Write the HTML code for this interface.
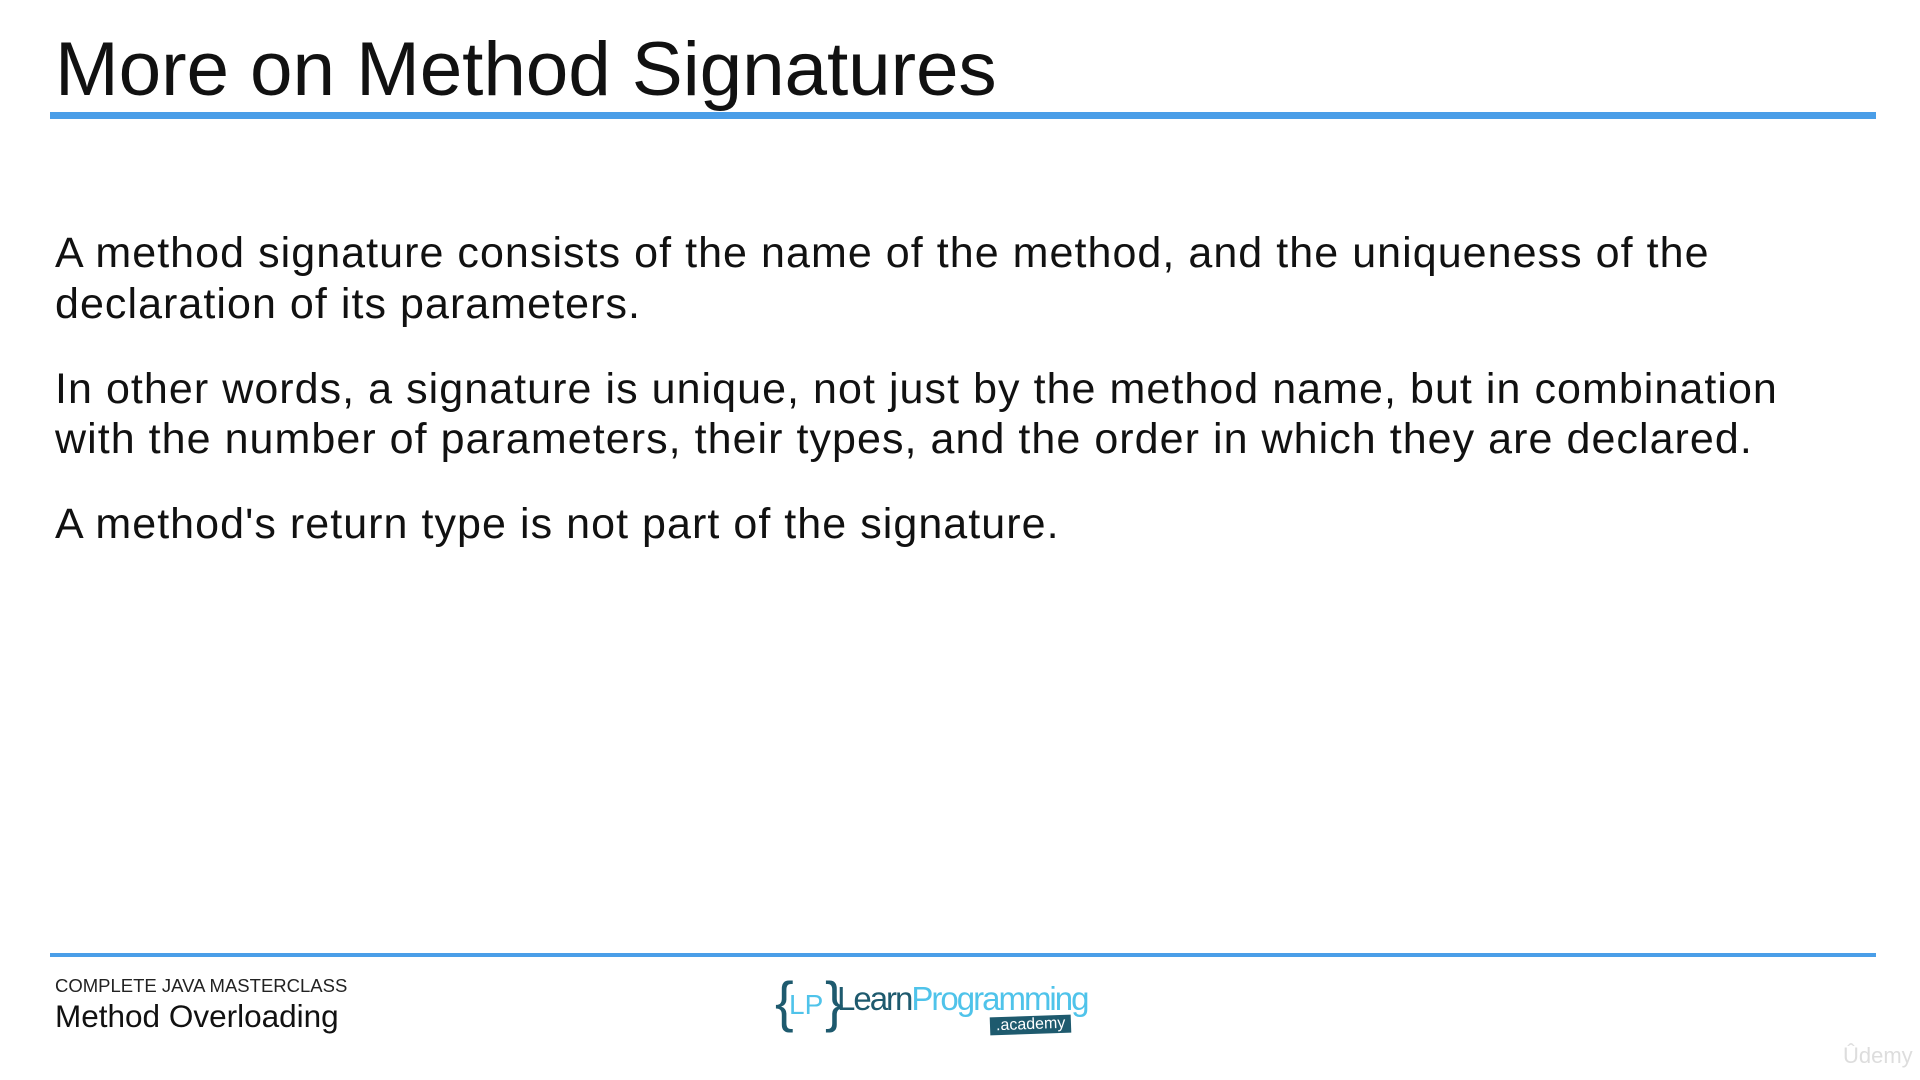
<!DOCTYPE html>
<html><head><meta charset="utf-8"><style>
html,body{margin:0;padding:0;background:#fff;}
body{width:1920px;height:1080px;position:relative;overflow:hidden;font-family:"Liberation Sans","DejaVu Sans",sans-serif;color:#111;}
.t{position:absolute;white-space:nowrap;line-height:1;}
#title{left:55px;top:32px;font-size:76.5px;letter-spacing:-0.1px;}
.hr{position:absolute;left:50px;width:1826px;background:#4a9ee8;}
.b{font-size:43px;left:55px;letter-spacing:1.05px;}
</style></head><body>
<div class="t" id="title">More on Method Signatures</div>
<div class="hr" style="top:112px;height:7px"></div>

<div class="t b" style="top:232px">A method signature consists of the name of the method, and the uniqueness of the</div>
<div class="t b" style="top:283px">declaration of its parameters.</div>
<div class="t b" style="top:368px">In other words, a signature is unique, not just by the method name, but in combination</div>
<div class="t b" style="top:418px">with the number of parameters, their types, and the order in which they are declared.</div>
<div class="t b" style="top:503px">A method's return type is not part of the signature.</div>

<div class="hr" style="top:953px;height:4px"></div>
<div class="t" style="left:55px;top:977px;font-size:18.5px;color:#222">COMPLETE JAVA MASTERCLASS</div>
<div class="t" style="left:55px;top:1001px;font-size:31.5px;color:#111">Method Overloading</div>

<div style="position:absolute;left:775px;top:974px;width:320px;height:64px">
 <div class="t" style="left:0;top:0;font-size:56px;color:#1e5a6e;font-weight:300">{</div>
 <div class="t" style="left:14px;top:17px;font-size:28px;color:#4fc3ea">LP</div>
 <div class="t" style="left:50px;top:0;font-size:56px;color:#1e5a6e">}</div>
 <div class="t" style="left:62px;top:8px;font-size:33px;letter-spacing:-2px"><span style="color:#1e5a6e">Learn</span><span style="color:#4fc3ea">Programming</span></div>
 <div class="t" style="left:215px;top:42px;background:#1e5a6e;color:#fff;font-size:16px;padding:1px 6px;transform:rotate(-2deg)">.academy</div>
</div>
<div class="t" style="left:1843px;top:1045px;font-size:22px;color:#ddd">Ûdemy</div>
</body></html>
